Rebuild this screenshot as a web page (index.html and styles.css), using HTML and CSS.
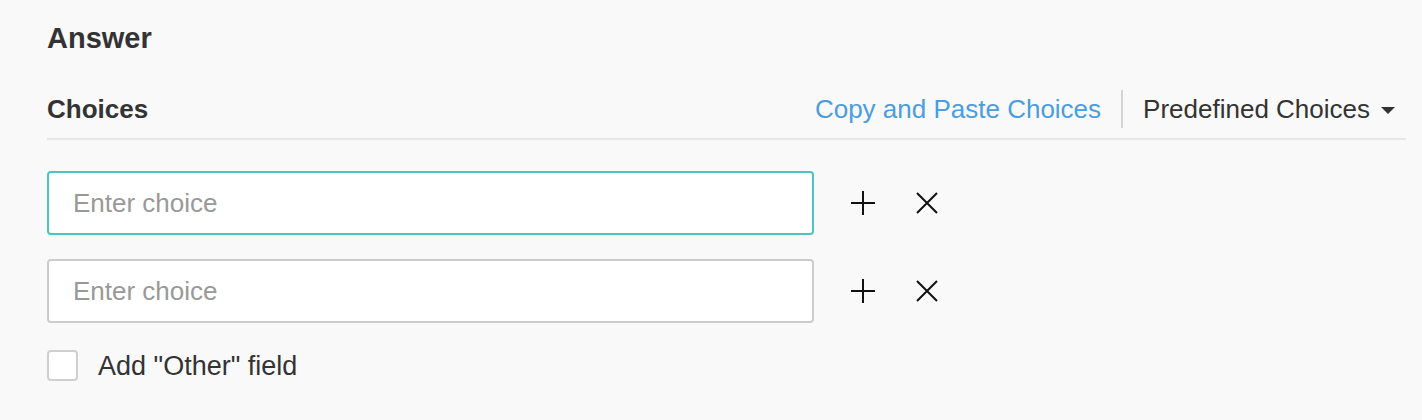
FILE: index.html
```html
<!DOCTYPE html>
<html>
<head>
<meta charset="utf-8">
<link rel="stylesheet" href="styles.css">
</head>
<body>
<div class="panel">
  <h2 class="title">Answer</h2>
  <div class="choices-header">
    <h3 class="subtitle">Choices</h3>
    <div class="actions">
      <a class="link">Copy and Paste Choices</a>
      <span class="sep"></span>
      <span class="dropdown">Predefined Choices<span class="caret"></span></span>
    </div>
  </div>
  <div class="choice-list">
    <div class="choice-row">
      <div class="input focused">Enter choice</div>
      <div class="icons">
        <svg class="icon" width="26" height="26" viewBox="0 0 26 26"><path d="M13 1V25M1 13H25" stroke="#111" stroke-width="2" fill="none"/></svg>
        <svg class="icon" width="22" height="22" viewBox="0 0 22 22"><path d="M1 1L21 21M21 1L1 21" stroke="#111" stroke-width="2" fill="none"/></svg>
      </div>
    </div>
    <div class="choice-row">
      <div class="input">Enter choice</div>
      <div class="icons">
        <svg class="icon" width="26" height="26" viewBox="0 0 26 26"><path d="M13 1V25M1 13H25" stroke="#111" stroke-width="2" fill="none"/></svg>
        <svg class="icon" width="22" height="22" viewBox="0 0 22 22"><path d="M1 1L21 21M21 1L1 21" stroke="#111" stroke-width="2" fill="none"/></svg>
      </div>
    </div>
  </div>
  <label class="other">
    <span class="checkbox"></span>
    <span class="other-text">Add "Other" field</span>
  </label>
</div>
</body>
</html>
```
FILE: styles.css
```css
html, body {
  margin: 0;
  padding: 0;
  background: #f9f9f9;
  font-family: "Liberation Sans", Arial, Helvetica, sans-serif;
  color: #333;
}
.panel {
  padding: 22px 16px 0 47px;
}
.title {
  margin: 0;
  font-size: 29px;
  line-height: 32px;
  font-weight: bold;
  color: #333;
}
.choices-header {
  margin-top: 36px;
  display: flex;
  align-items: center;
  justify-content: space-between;
  padding-bottom: 10px;
  border-bottom: 2px solid #e6e6e6;
}
.subtitle {
  margin: 0;
  font-size: 26px;
  line-height: 30px;
  font-weight: bold;
  color: #333;
}
.actions {
  display: flex;
  align-items: center;
  padding-right: 11px;
  font-size: 26px;
  line-height: 30px;
}
.link {
  color: #4a9de0;
}
.sep {
  width: 2px;
  height: 38px;
  background: #d4d4d4;
  margin: 0 20px 0 20px;
}
.dropdown {
  display: flex;
  align-items: center;
  color: #333;
}
.caret {
  margin-left: 11px;
  margin-top: 2px;
  width: 0;
  height: 0;
  border-left: 7px solid transparent;
  border-right: 7px solid transparent;
  border-top: 7px solid #333;
}
.choice-list {
  margin-top: 31px;
  display: flex;
  flex-direction: column;
  gap: 24px;
}
.choice-row {
  display: flex;
  align-items: center;
}
.input {
  width: 767px;
  height: 64px;
  box-sizing: border-box;
  border: 2px solid #cccccc;
  border-radius: 4px;
  background: #fff;
  padding-left: 24px;
  display: flex;
  align-items: center;
  font-size: 26px;
  color: #999;
}
.input.focused {
  border-color: #4ec4c0;
}
.icons {
  display: flex;
  align-items: center;
  margin-left: 36px;
  gap: 40px;
}
.icon {
  display: block;
}
.other {
  margin-top: 27px;
  display: flex;
  align-items: center;
}
.checkbox {
  width: 31px;
  height: 31px;
  box-sizing: border-box;
  border: 2px solid #cfcfcf;
  border-radius: 4px;
  background: #fff;
}
.other-text {
  margin-left: 20px;
  font-size: 27px;
  line-height: 30px;
  color: #333;
}
```
